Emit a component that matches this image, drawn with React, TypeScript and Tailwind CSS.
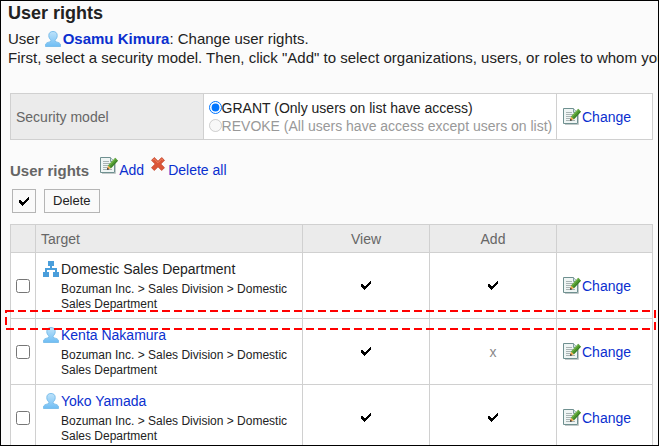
import type { ReactNode } from "react";

interface RightsRow {
  name: string;
  kind: "organization" | "user";
  view: boolean;
  add: boolean;
}

const rows: RightsRow[] = [
  { name: "Domestic Sales Department", kind: "organization", view: true, add: true },
  { name: "Kenta Nakamura", kind: "user", view: true, add: false },
  { name: "Yoko Yamada", kind: "user", view: true, add: true },
];

const path = "Bozuman Inc. > Sales Division > Domestic Sales Department";

function UserIcon() {
  return (
    <svg width="16" height="16" viewBox="0 0 16 16" className="shrink-0" aria-hidden="true">
      <defs>
        <linearGradient id="user-fill" x1="0" y1="0" x2="0" y2="1">
          <stop offset="0" stopColor="#bfe3fa" />
          <stop offset="1" stopColor="#6fbdf4" />
        </linearGradient>
      </defs>
      <path
        d="M8 .5C5.300 .5 3.800 2 3.800 4.500C3.800 6.500 4.700 8.200 6 9.200V10.200C4.500 11.200 1.600 11.500 .8 12.900C.5 13.600 .5 14.500 .5 15.500H15.500C15.500 14.500 15.500 13.600 15.200 12.900C14.400 11.500 11.500 11.200 10 10.200V9.200C11.300 8.200 12.200 6.500 12.200 4.500C12.200 2 10.700 .5 8 .5Z"
        fill="url(#user-fill)"
        stroke="#7dbfeb"
      />
    </svg>
  );
}

function OrganizationIcon() {
  return (
    <svg width="16" height="16" viewBox="0 0 16 16" className="shrink-0" aria-hidden="true">
      <path
        d="M5 0H11V5H9V7H14V11H16V16H10V11H12V9H4V11H6V16H0V11H2V7H7V5H5Z"
        fill="#4a9edb"
      />
    </svg>
  );
}

function EditIcon() {
  return (
    <svg width="18" height="17" viewBox="0 0 18 17" className="shrink-0" aria-hidden="true">
      <path d="M2 16.500H15.500V5" fill="none" stroke="#c2c9c9" />
      <path d="M.5 .5H10.500L14.500 4.500V15.500H.5Z" fill="#eff5f4" stroke="#6f9090" />
      <path d="M10.500 .5V4.500H14.500" fill="#d6e3e2" stroke="#7f9f9f" />
      <path d="M3 4.500H9M3 6.500H10M3 8.500H9M3 10.500H8M3 12.500H12" stroke="#a9b4b4" />
      <path d="M7.200 12.600L8 8.400L11 11.300Z" fill="#f5a94a" />
      <path d="M7 12.800L7.500 10.700L9.200 12.200Z" fill="#111" />
      <path d="M8 8.400L15.200 .8L18 3.700L11 11.300Z" fill="#4c962f" />
      <path d="M8.900 8.700L15.600 1.700" stroke="#86c552" />
      <path d="M10.700 10.700L17.500 3.600" stroke="#2f6d1c" strokeWidth=".8" />
    </svg>
  );
}

function DeleteIcon() {
  return (
    <svg width="14" height="14" viewBox="0 0 14 14" className="shrink-0" aria-hidden="true">
      <path
        d="M3.300 .5L7 4.200L10.700 .5L13.500 3.300L9.800 7L13.500 10.700L10.700 13.500L7 9.800L3.300 13.500L.5 10.700L4.200 7L.5 3.300Z"
        fill="#dc5638"
        stroke="#c54a31"
        strokeWidth=".8"
      />
      <path d="M2 3.300L3.300 2L7 5.700L10.700 2L12 3.300" fill="none" stroke="#ee8565" />
    </svg>
  );
}

function CheckMark() {
  return (
    <svg width="10" height="9" viewBox="0 0 10 9" className="mx-auto" role="img" aria-label="Allowed">
      <path d="M0 3H2V4H3V5H5V4H6V3H7V2H8V1H9V0H10V3H9V4H8V5H7V6H6V7H5V8H4V9H3V8H2V7H1V6H0Z" fill="#000" />
    </svg>
  );
}

function IconLink({ icon, children }: { icon: ReactNode; children: ReactNode }) {
  return (
    <a href="#" className="flex items-center gap-px text-[#0a2fcf] hover:underline">
      {icon}
      {children}
    </a>
  );
}

function Mark({ allowed }: { allowed: boolean }) {
  return allowed ? <CheckMark /> : <span className="text-[#888]">x</span>;
}

export default function App() {
  return (
    <main className="h-screen overflow-hidden border border-black bg-[#fbfbfb] pl-[9px] pr-[5px] font-['Liberation_Sans',Arial,sans-serif] text-[14px] leading-[18px] text-[#222]">
      <header className="-ml-0.5 whitespace-nowrap text-[15px] leading-[19px]">
        <h1 className="text-[18px] font-bold leading-6">User rights</h1>
        <p className="mt-1 flex items-center">
          User
          <a href="#" className="ml-[5px] flex items-center gap-0.5 font-bold text-[#0a2fcf] hover:underline">
            <UserIcon />
            Osamu Kimura
          </a>
          : Change user rights.
        </p>
        <p>
          First, select a security model. Then, click "Add" to select organizations, users, or roles to whom you
        </p>
      </header>

      <table className="mt-[26px] w-full table-fixed border-collapse bg-white">
        <tbody>
          <tr className="h-[46px]">
            <th className="w-[30%] border border-[#d0d0d0] bg-[#ebebeb] px-[5px] text-left font-normal text-[#666]">
              Security model
            </th>
            <td className="whitespace-nowrap border border-[#d0d0d0] pl-[5px]">
              <label className="flex items-center">
                <input type="radio" name="model" defaultChecked className="m-0 size-[13px] shrink-0 accent-[#0075ff]" />
                GRANT (Only users on list have access)
              </label>
              <label className="flex items-center text-[#999]">
                <input type="radio" name="model" disabled className="m-0 size-[13px] shrink-0" />
                REVOKE (All users have access except users on list)
              </label>
            </td>
            <td className="w-24 border border-[#d0d0d0] px-1.5">
              <IconLink icon={<EditIcon />}>Change</IconLink>
            </td>
          </tr>
        </tbody>
      </table>

      <div className="mt-[17px] flex items-end">
        <h2 className="mr-[11px] text-[15px] font-bold leading-6 text-[#666]">User rights</h2>
        <a href="#" className="flex items-start text-[#0a2fcf] hover:underline">
          <EditIcon />
          <span className="ml-px leading-[26px]">Add</span>
        </a>
        <a href="#" className="ml-[7px] flex items-start text-[#0a2fcf] hover:underline">
          <DeleteIcon />
          <span className="ml-[3px] leading-[26px]">Delete all</span>
        </a>
      </div>

      <div className="ml-0.5 mt-1.5 flex gap-2">
        <button type="button" aria-label="Select all" className="size-6 border border-[#b5b5b5] bg-[#fafafa]">
          <CheckMark />
        </button>
        <button type="button" className="h-6 border border-[#b5b5b5] bg-[#fafafa] px-2 text-[13px]">
          Delete
        </button>
      </div>

      <div className="relative mt-[11px]">
        <table className="w-full table-fixed border-collapse bg-white">
          <thead>
            <tr className="h-7 bg-[#ebebeb] text-[#666]">
              <th className="w-[25px] border border-[#d0d0d0]"></th>
              <th className="border border-[#d0d0d0] px-[5px] text-left font-normal">Target</th>
              <th className="w-[127px] border border-[#d0d0d0] font-normal">View</th>
              <th className="w-[127px] border border-[#d0d0d0] font-normal">Add</th>
              <th className="w-24 border border-[#d0d0d0]"></th>
            </tr>
          </thead>
          <tbody>
            {rows.map((row) => (
              <tr key={row.name} className="h-[66px]">
                <td className="border border-[#d0d0d0]">
                  <input type="checkbox" aria-label={row.name} className="mx-auto block size-3.5" />
                </td>
                <td className="border border-[#d0d0d0] px-[7px]">
                  {row.kind === "user" ? (
                    <a href="#" className="flex items-center gap-0.5 text-[#0a2fcf] hover:underline">
                      <UserIcon />
                      {row.name}
                    </a>
                  ) : (
                    <div className="flex items-center gap-0.5">
                      <OrganizationIcon />
                      {row.name}
                    </div>
                  )}
                  <div className="ml-[18px] mt-1 text-[12px] leading-[15px]">{path}</div>
                </td>
                <td className="border border-[#d0d0d0] text-center">
                  <Mark allowed={row.view} />
                </td>
                <td className="border border-[#d0d0d0] text-center">
                  <Mark allowed={row.add} />
                </td>
                <td className="border border-[#d0d0d0] px-1.5">
                  <IconLink icon={<EditIcon />}>Change</IconLink>
                </td>
              </tr>
            ))}
          </tbody>
        </table>

        {/* dashed marker across the first row boundary */}
        <div className="pointer-events-none absolute -left-1 -right-0.5 top-[87px] h-[18px]">
          <svg width="100%" height="100%" className="overflow-visible" aria-hidden="true">
            <rect width="100%" height="100%" fill="none" stroke="#f00" strokeWidth="2" strokeDasharray="8 4" />
          </svg>
        </div>
      </div>
    </main>
  );
}
